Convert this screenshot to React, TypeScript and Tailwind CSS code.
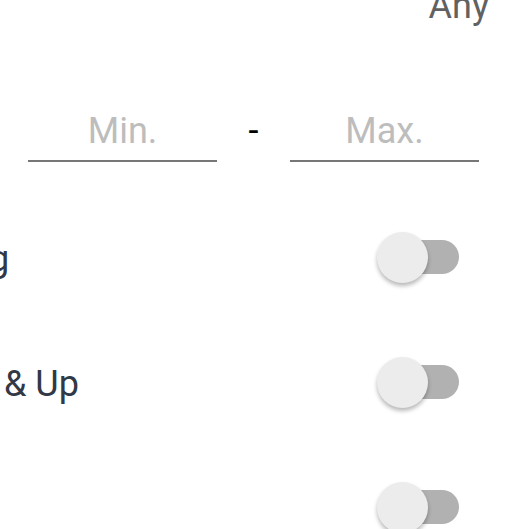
import React from "react";

function Toggle() {
  return (
    <div className="relative h-[52px] w-[82px] shrink-0">
      <div className="absolute right-0 top-[9px] h-[34px] w-[76px] rounded-full bg-[#b1b1b1]" />
      <div className="absolute left-0 top-[1px] size-[51px] rounded-full bg-[#ececec] shadow-[0_3px_4px_rgba(0,0,0,0.28)]" />
    </div>
  );
}

function FilterRow({ label, offset }: { label: string; offset?: string }) {
  return (
    <div className="flex h-[125px] items-center justify-between pr-[65px]">
      <span className={`pt-[5px] text-[36px] leading-none text-[#323845] ${offset ?? ""}`}>{label}</span>
      <Toggle />
    </div>
  );
}

export default function App() {
  return (
    <div className="h-[529px] w-[524px] overflow-hidden bg-white font-['Roboto',sans-serif]">
      <div className="-mt-[12px] flex justify-end pr-[35px]">
        <span className="text-[36px] leading-none text-[#616161]">Any</span>
      </div>

      <div className="mt-[89px] flex items-start pl-[28px]">
        <div className="w-[189px] border-b-2 border-[#777777] pb-[11px] text-center text-[36px] leading-none text-[#bdbdbd]">
          Min.
        </div>
        <div className="w-[73px] text-center text-[36px] leading-none text-black">-</div>
        <div className="w-[189px] border-b-2 border-[#777777] pb-[11px] text-center text-[36px] leading-none text-[#bdbdbd]">
          Max.
        </div>
      </div>

      <div className="mt-[32px]">
        <FilterRow label="g" offset="-ml-[11px]" />
        <FilterRow label="& Up" offset="ml-[4px]" />
        <FilterRow label="" />
      </div>
    </div>
  );
}
